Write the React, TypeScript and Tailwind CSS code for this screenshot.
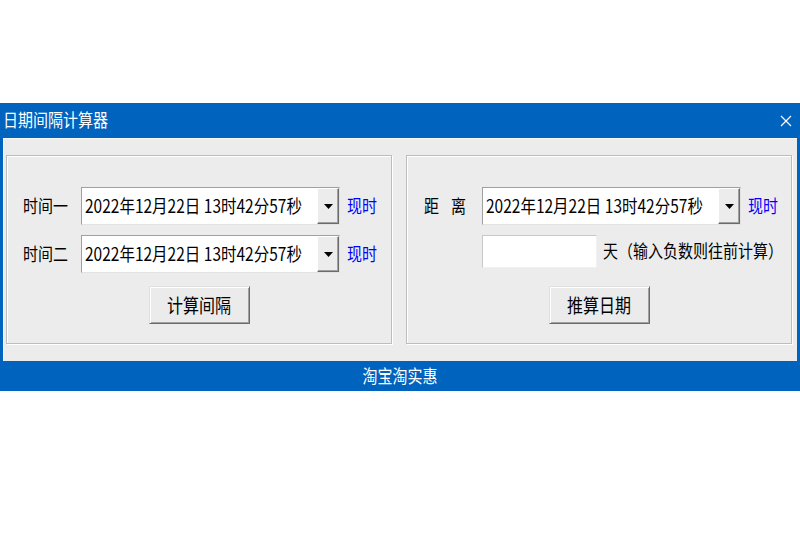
const font = { fontFamily: '"Noto Sans CJK SC", "Liberation Sans", sans-serif' };

function Txt({ children, className = '' }: { children: React.ReactNode; className?: string }) {
  return <span className={`inline-block scale-y-[1.18] ${className}`}>{children}</span>;
}

function DateCombo() {
  return (
    <div className="flex h-[38px] w-[259px] border border-t-[#a0a0a0] border-l-[#a0a0a0] border-r-[#e3e3e3] border-b-[#e3e3e3] bg-white">
      <div className="flex flex-1 items-center pl-[3px] text-[15.5px] text-black">
        <Txt>2022年12月22日 13时42分57秒</Txt>
      </div>
      <div className="flex w-[22px] items-center justify-center border border-t-white border-l-white border-r-[#6b6b6b] border-b-[#6b6b6b] bg-[#ececec] shadow-[inset_-1px_-1px_0_#a0a0a0]">
        <svg width="9" height="5" viewBox="0 0 9 5">
          <path d="M0 0h9L4.5 5z" fill="#000" />
        </svg>
      </div>
    </div>
  );
}

function Button({ label }: { label: string }) {
  return (
    <div className="flex h-[38px] w-[101px] items-center justify-center border border-t-[#e0e0e0] border-l-[#e0e0e0] border-r-[#6b6b6b] border-b-[#6b6b6b] bg-[#ebebeb] text-[16px] text-black shadow-[inset_1px_1px_0_#fff,inset_-1px_-1px_0_#a0a0a0]">
      <Txt>{label}</Txt>
    </div>
  );
}

function Group({ children }: { children: React.ReactNode }) {
  return (
    <div className="flex h-[189px] w-[386px] flex-col border border-[#bdbdbd] shadow-[inset_1px_1px_0_#fff,1px_1px_0_#fff]">
      {children}
    </div>
  );
}

export default function App() {
  return (
    <div className="h-[533px] w-[800px] bg-white" style={font}>
      <div className="h-[103px]" />
      <div className="bg-[#0063be]">
        <div className="flex h-[35px] items-center justify-between pl-[3px] pr-[8px] text-white">
          <Txt className="text-[15px]">日期间隔计算器</Txt>
          <svg width="12" height="12" viewBox="0 0 12 12">
            <path d="M1 1l10 10M11 1L1 11" stroke="#fff" strokeWidth="1.2" />
          </svg>
        </div>
        <div className="mx-[3px] flex h-[223px] gap-[14px] border-t border-l border-[#f8f8f8] bg-[#ececec] pl-[2px] pt-[16px] text-[15px] text-black">
          <Group>
            <div className="mt-[31px] flex items-center pl-[16px]">
              <Txt className="w-[58px]">时间一</Txt>
              <DateCombo />
              <Txt className="ml-[7px] text-[#0000ff]">现时</Txt>
            </div>
            <div className="mt-[10px] flex items-center pl-[16px]">
              <Txt className="w-[58px]">时间二</Txt>
              <DateCombo />
              <Txt className="ml-[7px] text-[#0000ff]">现时</Txt>
            </div>
            <div className="mt-[13px] flex justify-center">
              <Button label="计算间隔" />
            </div>
          </Group>
          <Group>
            <div className="mt-[31px] flex items-center pl-[17px]">
              <span className="flex w-[58px] gap-[12px]">
                <Txt>距</Txt>
                <Txt>离</Txt>
              </span>
              <DateCombo />
              <Txt className="ml-[7px] text-[#0000ff]">现时</Txt>
            </div>
            <div className="mt-[10px] flex items-center pl-[75px]">
              <div className="h-[33px] w-[115px] border border-t-[#c8c8c8] border-l-[#c8c8c8] border-r-[#f0f0f0] border-b-[#f0f0f0] bg-white" />
              <Txt className="ml-[6px]">天（输入负数则往前计算）</Txt>
            </div>
            <div className="mt-[18px] flex justify-center">
              <Button label="推算日期" />
            </div>
          </Group>
        </div>
        <div className="flex h-[30px] items-center justify-center text-[15px] text-white">
          <Txt>淘宝淘实惠</Txt>
        </div>
      </div>
    </div>
  );
}
